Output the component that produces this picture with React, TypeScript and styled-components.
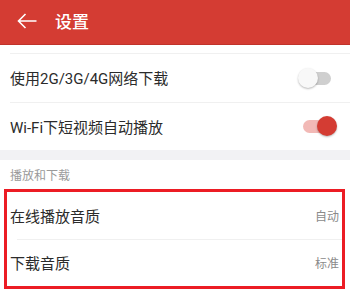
import React, { useState } from 'react';
import styled, { createGlobalStyle } from 'styled-components';

const GlobalStyle = createGlobalStyle`
  html, body {
    margin: 0;
    padding: 0;
    background: #ffffff;
  }
  body {
    font-family: Roboto, "Noto Sans CJK SC", sans-serif;
    -webkit-font-smoothing: antialiased;
  }
`;

const Page = styled.div`
  width: 350px;
  height: 290px;
  overflow: hidden;
  background: #ffffff;
`;

const Header = styled.header`
  height: 44px;
  background: #d43c33;
  display: flex;
  align-items: center;
  padding-left: 17px;
  box-shadow: 0 1px 0 #c0332b;
  position: relative;
  z-index: 1;
`;

const BackButton = styled.button`
  border: none;
  background: transparent;
  padding: 0;
  width: 20px;
  height: 20px;
  display: flex;
  align-items: center;
  justify-content: center;
  margin-right: 18px;
  margin-top: -2px;
  cursor: pointer;
`;

const Title = styled.h1`
  margin: 0;
  margin-top: -3px;
  color: #ffffff;
  font-size: 17px;
  font-weight: 500;
  letter-spacing: 0;
`;

const Group = styled.section`
  padding-top: 9px;
`;

const Row = styled.div<{ height?: number; divided?: boolean }>`
  height: ${p => p.height ?? 49}px;
  display: flex;
  align-items: center;
  justify-content: space-between;
  padding-left: 10px;
  padding-right: 13px;
  position: relative;
  &::before {
    content: '';
    display: ${p => (p.divided === false ? 'none' : 'block')};
    position: absolute;
    top: 0;
    left: 10px;
    right: 0;
    height: 1px;
    background: #f0f0f0;
  }
`;

const Label = styled.span`
  font-size: 15px;
  color: #2b2b2b;
`;

const Value = styled.span`
  font-size: 12px;
  color: #8a8a8a;
`;

const Gap = styled.div`
  height: 10px;
  background: #f2f2f4;
`;

const SectionTitle = styled.div`
  height: 29px;
  display: flex;
  align-items: center;
  padding-left: 10px;
  font-size: 12px;
  color: #9a9a9a;
`;

const Highlight = styled.div`
  margin: 0 5px 0 4px;
  border: 3px solid #ec1c24;
  & > div {
    padding-left: 3px;
    padding-right: 3px;
  }
`;

const SwitchWrap = styled.button`
  position: relative;
  width: 40px;
  height: 22px;
  border: none;
  background: transparent;
  padding: 0;
  cursor: pointer;
`;

const Track = styled.span<{ on: boolean }>`
  position: absolute;
  left: 6px;
  right: 6px;
  top: 5px;
  height: 13px;
  border-radius: 7px;
  background: ${p => (p.on ? '#f2b9b6' : '#cfcfcf')};
`;

const Knob = styled.span<{ on: boolean }>`
  position: absolute;
  top: 1px;
  left: ${p => (p.on ? '20px' : '1px')};
  width: 20px;
  height: 20px;
  border-radius: 50%;
  background: ${p => (p.on ? '#d43c33' : '#f8f8f8')};
  box-shadow: 0 1px 2px rgba(0, 0, 0, 0.28);
`;

const Toggle: React.FC<{ value: boolean; onChange: (v: boolean) => void }> = ({ value, onChange }) => (
  <SwitchWrap onClick={() => onChange(!value)}>
    <Track on={value} />
    <Knob on={value} />
  </SwitchWrap>
);

const ArrowLeft = () => (
  <svg width="20" height="16" viewBox="0 0 20 16" fill="none">
    <path d="M19.5 8H1.5M8.5 1L1.5 8l7 7" stroke="#ffffff" strokeWidth="1.6" />
  </svg>
);

const App: React.FC = () => {
  const [mobileData, setMobileData] = useState(false);
  const [autoPlay, setAutoPlay] = useState(true);

  return (
    <>
      <GlobalStyle />
      <Page>
        <Header>
          <BackButton aria-label="返回">
            <ArrowLeft />
          </BackButton>
          <Title>设置</Title>
        </Header>

        <Group>
          <Row>
            <Label>使用2G/3G/4G网络下载</Label>
            <Toggle value={mobileData} onChange={setMobileData} />
          </Row>
          <Row height={48}>
            <Label>Wi-Fi下短视频自动播放</Label>
            <Toggle value={autoPlay} onChange={setAutoPlay} />
          </Row>
        </Group>

        <Gap />

        <SectionTitle>播放和下载</SectionTitle>
        <Highlight>
          <Row height={47} divided={false}>
            <Label>在线播放音质</Label>
            <Value>自动</Value>
          </Row>
          <Row height={47}>
            <Label>下载音质</Label>
            <Value>标准</Value>
          </Row>
        </Highlight>
      </Page>
    </>
  );
};

export default App;
